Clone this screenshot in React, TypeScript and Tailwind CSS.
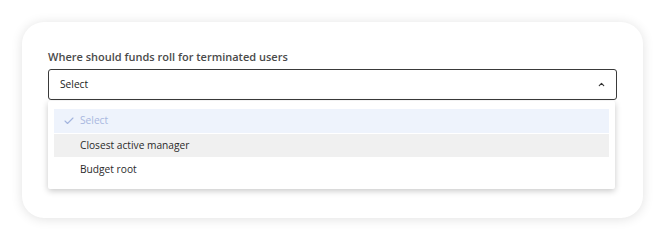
import { Check, ChevronUp } from "lucide-react";

const options = [
  { label: "Select", selected: true },
  { label: "Closest active manager", hovered: true },
  { label: "Budget root" },
];

export default function App() {
  return (
    <div className="min-h-[241px] w-[666px] bg-white p-[22px] font-['Open_Sans',sans-serif]">
      {/* CARD */}
      <div className="relative h-[196px] w-[621px] rounded-[22px] bg-white px-[26px] pt-[27px] shadow-[0_1px_12px_rgba(0,0,0,0.12)]">
        <label className="block text-[11px] leading-[16px] font-semibold text-[#4a4a4a]">
          Where should funds roll for terminated users
        </label>

        <div className="relative mt-[4px]">
          <button className="flex h-[31px] w-full items-center justify-between rounded-[3px] border border-[#3a3a3a] bg-white pl-[11px] pr-[10px] text-[10.2px] text-[#222]">
            <span>Select</span>
            <ChevronUp size={9} strokeWidth={3} className="text-[#333]" />
          </button>

          {/* MENU */}
          <div className="absolute left-0 top-[32px] w-[567px] rounded-[2px] bg-white pt-[8px] pb-[7px] shadow-[0_2px_6px_rgba(0,0,0,0.22)]">
            {options.map((opt) => (
              <div
                key={opt.label}
                className={
                  opt.selected
                    ? "mx-[6px] mb-[1px] flex h-[24px] items-center bg-[#eef3fc] text-[10.2px] text-[#a9b8e0]"
                    : opt.hovered
                    ? "mx-[6px] mb-[1px] flex h-[23px] items-center bg-[#f0f0f0] text-[10.2px] text-[#2a2a2a]"
                    : "mx-[6px] flex h-[24px] items-center text-[10.2px] text-[#2a2a2a]"
                }
              >
                <span className="flex w-[26px] justify-center pl-[3px]">
                  {opt.selected && <Check size={12} strokeWidth={2.25} className="text-[#a3b4de]" />}
                </span>
                <span>{opt.label}</span>
              </div>
            ))}
          </div>
        </div>
      </div>
    </div>
  );
}
